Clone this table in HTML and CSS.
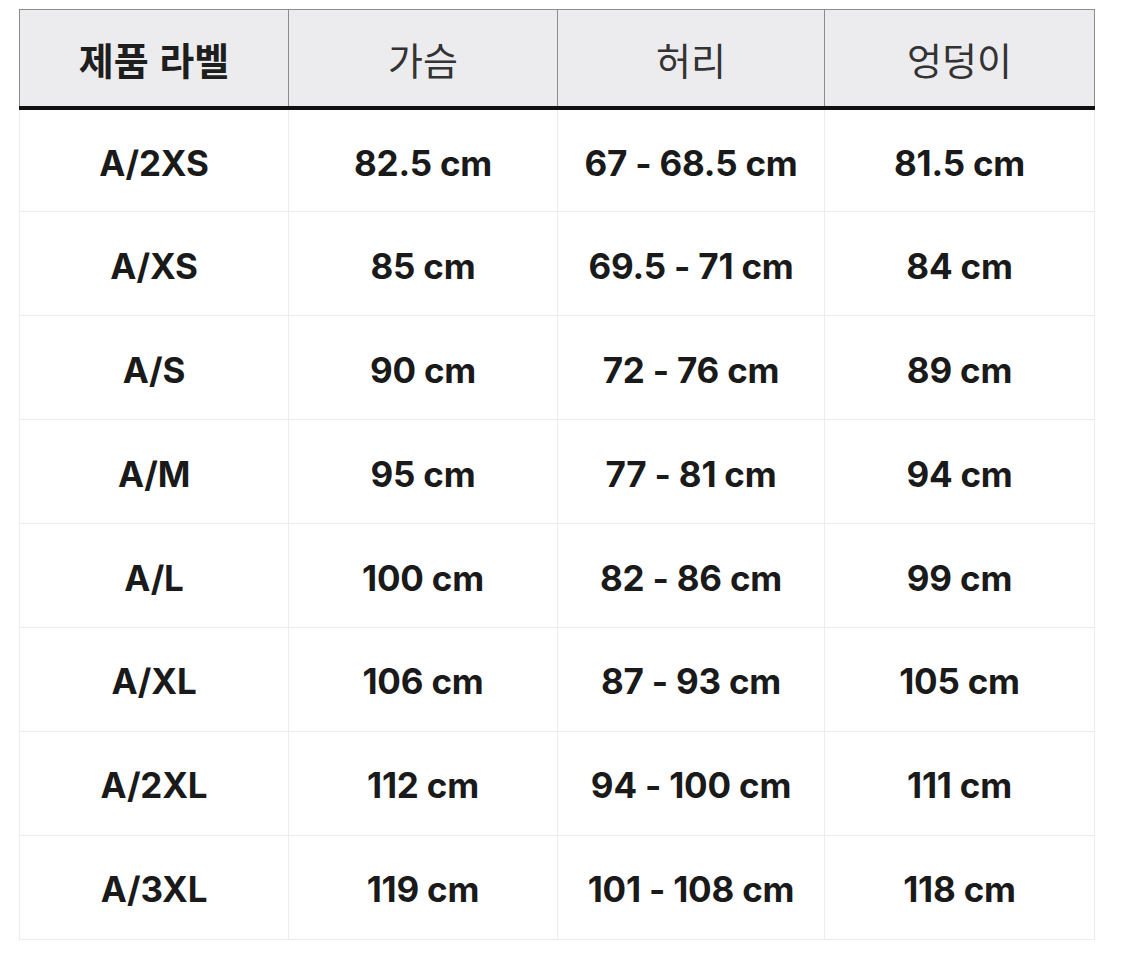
FILE: index.html
```html
<!DOCTYPE html>
<html lang="ko">
<head>
<meta charset="utf-8">
<title>사이즈 표</title>
<link rel="stylesheet" href="styles.css">
</head>
<body>
<table class="size-table">
  <colgroup>
    <col class="c1"><col class="c2"><col class="c3"><col class="c4">
  </colgroup>
  <thead>
    <tr>
      <th class="label-head">제품 라벨</th>
      <th>가슴</th>
      <th>허리</th>
      <th>엉덩이</th>
    </tr>
  </thead>
  <tbody>
    <tr><td>A/2XS</td><td>82.5 cm</td><td>67 - 68.5 cm</td><td>81.5 cm</td></tr>
    <tr><td>A/XS</td><td>85 cm</td><td>69.5 - 71 cm</td><td>84 cm</td></tr>
    <tr><td>A/S</td><td>90 cm</td><td>72 - 76 cm</td><td>89 cm</td></tr>
    <tr><td>A/M</td><td>95 cm</td><td>77 - 81 cm</td><td>94 cm</td></tr>
    <tr><td>A/L</td><td>100 cm</td><td>82 - 86 cm</td><td>99 cm</td></tr>
    <tr><td>A/XL</td><td>106 cm</td><td>87 - 93 cm</td><td>105 cm</td></tr>
    <tr><td>A/2XL</td><td>112 cm</td><td>94 - 100 cm</td><td>111 cm</td></tr>
    <tr><td>A/3XL</td><td>119 cm</td><td>101 - 108 cm</td><td>118 cm</td></tr>
  </tbody>
</table>
</body>
</html>
```
FILE: styles.css
```css
html, body {
  margin: 0;
  padding: 0;
  background: #ffffff;
}

body {
  padding: 9px 0 0 19px;
}

.size-table {
  width: 1075px;
  table-layout: fixed;
  border-collapse: collapse;
  font-family: Inter, "Noto Sans CJK KR", sans-serif;
  color: #1a1a1a;
}

.c1 { width: 269px; }
.c2 { width: 269px; }
.c3 { width: 267px; }
.c4 { width: 270px; }

.size-table th {
  height: 96px;
  padding: 0;
  background: #ececee;
  border: 1px solid #8c8c8c;
  border-bottom: 4px solid #111111;
  font-family: "Noto Sans CJK KR", sans-serif;
  font-size: 38px;
  font-weight: 400;
  color: #333333;
  text-align: center;
  vertical-align: middle;
}

.size-table th.label-head {
  font-weight: 700;
  color: #1e1e1e;
}

.size-table td {
  height: 103.9px;
  padding: 4px 0 0;
  box-sizing: border-box;
  border: 1px solid #ececec;
  font-size: 35px;
  font-weight: 700;
  letter-spacing: -0.2px;
  text-align: center;
  vertical-align: middle;
}
```
